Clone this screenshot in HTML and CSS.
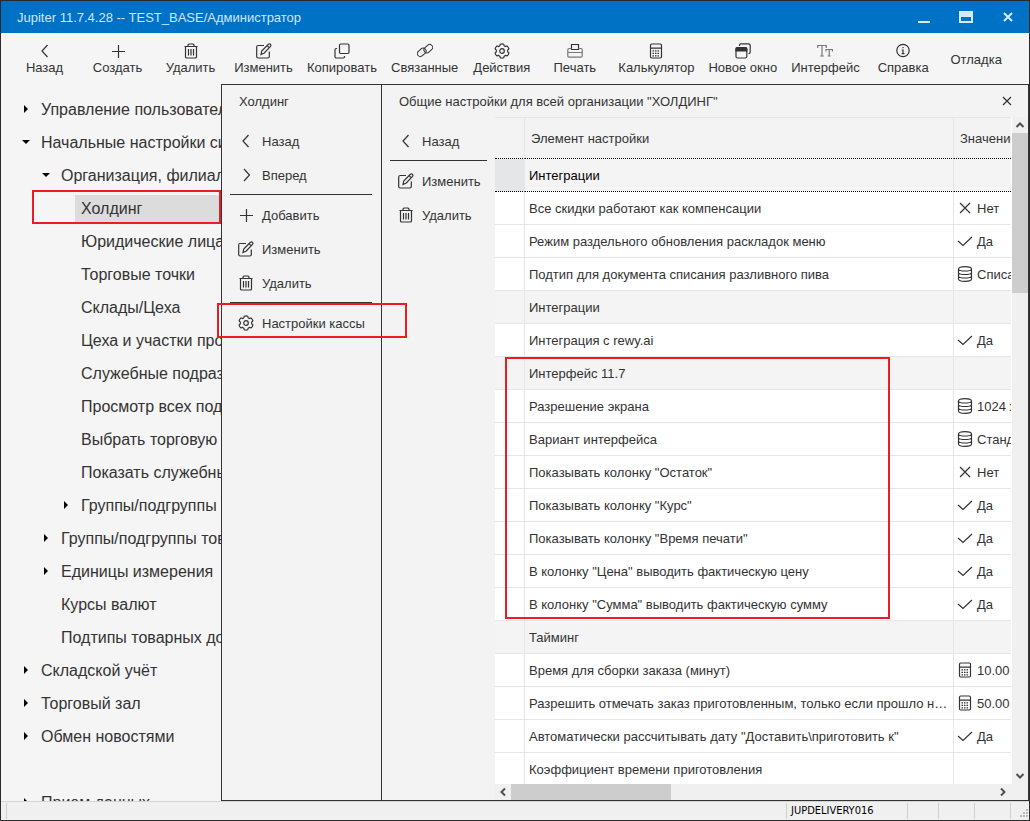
FILE: index.html
```html
<!DOCTYPE html>
<html lang="ru">
<head>
<meta charset="utf-8">
<title>Jupiter 11.7.4.28 -- TEST_BASE/Администратор</title>
<link rel="stylesheet" href="styles.css">
</head>
<body>
<svg class="sprite" aria-hidden="true">
  <symbol id="i-back" viewBox="0 0 16 16"><path d="M10.500 2 5 8l5.500 6"/></symbol>
  <symbol id="i-forward" viewBox="0 0 16 16"><path d="M6 2l5.500 6L6 14"/></symbol>
  <symbol id="i-plus" viewBox="0 0 16 16"><path d="M8.500 2v13M2 8.500h13"/></symbol>
  <symbol id="i-trash" viewBox="0 0 16 16"><path d="M1.500 3.500h13M5 3.500V2l1-1h4l1 1v1.500M2.500 3.500v10.200q0 1.300 1.300 1.300h8.400q1.300 0 1.300-1.300V3.500M5.500 6v6.500M8 6v6.500M10.500 6v6.500"/></symbol>
  <symbol id="i-edit" viewBox="0 0 16 16"><path d="M8 2.500H2.200Q.7 2.500.7 4v9.500Q.7 15 2.200 15h9.600q1.500 0 1.500-1.500V8.500M5 11.500l.7-3.500L12.400 1.300q1-.8 2 0 1 1 .1 2L8.300 10zM11.300 2.800l2 2"/></symbol>
  <symbol id="i-copy" viewBox="0 0 16 16"><path d="M6.700 1h7.100q1.200 0 1.200 1.200v7.100q0 1.200-1.200 1.200H6.700q-1.200 0-1.200-1.200V2.200Q5.500 1 6.700 1zM3 5.500h-.800Q1 5.500 1 6.700v7.100Q1 15 2.200 15h7.100q1.200 0 1.200-1.200V13"/></symbol>
  <symbol id="i-link" viewBox="0 0 16 16"><g class="thin"><rect x="-4.800" y="-3" width="9.600" height="6" rx="3" transform="translate(4.700 9.300) rotate(-42)"/><rect x="-4.800" y="-3" width="9.600" height="6" rx="3" transform="translate(11.300 5.700) rotate(-42)"/></g></symbol>
  <symbol id="i-gear" viewBox="0 0 16 16"><path d="M6.300 1.200Q8 .4 9.700 1.200l.4 1.500 1.300.8 1.600-.5q1.500 1 1.900 2.900l-1.200 1.200v1.700l1.200 1.200q-.4 1.900-1.900 2.900l-1.600-.4-1.300.8-.4 1.500q-1.700.8-3.400 0l-.4-1.500-1.300-.8-1.600.4q-1.500-1-1.900-2.900l1.200-1.200V7.100L1.100 5.900Q1.500 4 3 3l1.600.5 1.300-.8z"/><circle cx="8" cy="8" r="2.300"/></symbol>
  <symbol id="i-print" viewBox="0 0 16 16"><path d="M4.500 6.500v-5h7v5z"/><g class="soft"><path d="M4.500 5.500H2Q.8 5.500.8 7v6q0 1.200 1.200 1.200h12q1.200 0 1.200-1.200V7q0-1.500-1.200-1.500h-2.500M1 9.500h14"/></g></symbol>
  <symbol id="i-calc" viewBox="0 0 16 16"><path d="M3.700 1h8.600q1.200 0 1.200 1.200v11.600q0 1.200-1.200 1.200H3.700q-1.200 0-1.200-1.200V2.200Q2.500 1 3.700 1zM2.500 5.200h11"/><path stroke-dasharray="1.500 1" d="M4.500 7.800h7M4.500 10.300h7M4.500 12.800h7"/></symbol>
  <symbol id="i-windows" viewBox="0 0 16 16"><path d="M4.500 3V2.200Q4.500.8 6 .8h7.500q1.700 0 1.700 1.700V9q0 1.700-1.700 1.700M2.500 4.500h7.800q1.500 0 1.500 1.500v7.500q0 1.500-1.500 1.500H2.500Q1 15 1 13.500V6q0-1.500 1.500-1.500z"/><path class="solid" d="M1 8V6q0-1.500 1.500-1.500h7.800q1.500 0 1.500 1.500v2z"/></symbol>
  <symbol id="i-type" viewBox="0 0 16 16"><g class="soft"><path d="M.7 5V2.500h8.600V5M5 2.500v10.200M3.200 13h3.600M9 8.500V6.500h6.400v2M12.200 6.500V13M10.700 13h3"/></g></symbol>
  <symbol id="i-info" viewBox="0 0 16 16"><circle cx="8" cy="7.500" r="6.200"/><path d="M8 4v1.300M6.700 7H8v3.500M6.600 10.600h2.800"/></symbol>
  <symbol id="i-check" viewBox="0 0 16 16"><path d="M1 8l5 4.500L15 4"/></symbol>
  <symbol id="i-cross" viewBox="0 0 16 16"><path d="M3 3l10 10M13 3 3 13"/></symbol>
  <symbol id="i-db" viewBox="0 0 16 16"><path d="M1.500 3Q1.500.7 8 .7T14.500 3v10q0 2.300-6.500 2.300T1.500 13zM1.500 3.500q1 1.500 6.500 1.500t6.500-1.500M1.500 7q1 1.500 6.500 1.500T14.500 7M1.500 10.500q1 1.500 6.500 1.500t6.500-1.500"/></symbol>
  <symbol id="i-chev" viewBox="0 0 16 16"><path d="M4.500 10 8 6.500l3.500 3.500"/></symbol>
  <symbol id="i-right" viewBox="0 0 8 8"><path d="M2 0l4 4-4 4z"/></symbol>
  <symbol id="i-down" viewBox="0 0 8 8"><path d="M0 2h8L4 6z"/></symbol>
</svg>

<div class="window">
  <header class="titlebar">
    <h1 class="title">Jupiter 11.7.4.28 -- TEST_BASE/Администратор</h1>
    <button class="win-btn" aria-label="Свернуть"><svg viewBox="0 0 14 14"><path d="M1 12h12"/></svg></button>
    <button class="win-btn" aria-label="Развернуть"><svg viewBox="0 0 14 14"><path d="M1 2h12v10H1z"/><path class="fill" d="M1 2h12v4H1z"/></svg></button>
    <button class="win-btn" aria-label="Закрыть"><svg viewBox="0 0 14 14"><path d="M3 3l8 8M11 3l-8 8"/></svg></button>
  </header>

  <nav class="toolbar" aria-label="Панель инструментов">
    <button class="tool"><svg class="icon"><use href="#i-back"/></svg>Назад</button>
    <button class="tool"><svg class="icon"><use href="#i-plus"/></svg>Создать</button>
    <button class="tool"><svg class="icon"><use href="#i-trash"/></svg>Удалить</button>
    <button class="tool"><svg class="icon"><use href="#i-edit"/></svg>Изменить</button>
    <button class="tool"><svg class="icon"><use href="#i-copy"/></svg>Копировать</button>
    <button class="tool"><svg class="icon"><use href="#i-link"/></svg>Связанные</button>
    <button class="tool"><svg class="icon"><use href="#i-gear"/></svg>Действия</button>
    <button class="tool"><svg class="icon"><use href="#i-print"/></svg>Печать</button>
    <button class="tool"><svg class="icon"><use href="#i-calc"/></svg>Калькулятор</button>
    <button class="tool"><svg class="icon"><use href="#i-windows"/></svg>Новое окно</button>
    <button class="tool"><svg class="icon"><use href="#i-type"/></svg>Интерфейс</button>
    <button class="tool"><svg class="icon"><use href="#i-info"/></svg>Справка</button>
    <button class="tool">Отладка</button>
  </nav>

  <main class="workspace">
    <ul class="tree">
      <li class="node"><svg class="arrow"><use href="#i-right"/></svg><span class="node-label">Управление пользователями</span></li>
      <li class="node"><svg class="arrow"><use href="#i-down"/></svg><span class="node-label">Начальные настройки системы</span></li>
      <li class="node level-2"><svg class="arrow"><use href="#i-down"/></svg><span class="node-label">Организация, филиалы</span></li>
      <li class="node level-3 selected"><span class="arrow"></span><span class="node-label">Холдинг</span><span class="mark mark-node"></span></li>
      <li class="node level-3"><span class="arrow"></span><span class="node-label">Юридические лица</span></li>
      <li class="node level-3"><span class="arrow"></span><span class="node-label">Торговые точки</span></li>
      <li class="node level-3"><span class="arrow"></span><span class="node-label">Склады/Цеха</span></li>
      <li class="node level-3"><span class="arrow"></span><span class="node-label">Цеха и участки производства</span></li>
      <li class="node level-3"><span class="arrow"></span><span class="node-label">Служебные подразделения</span></li>
      <li class="node level-3"><span class="arrow"></span><span class="node-label">Просмотр всех подразделений</span></li>
      <li class="node level-3"><span class="arrow"></span><span class="node-label">Выбрать торговую точку</span></li>
      <li class="node level-3"><span class="arrow"></span><span class="node-label">Показать служебные</span></li>
      <li class="node level-3"><svg class="arrow"><use href="#i-right"/></svg><span class="node-label">Группы/подгруппы</span></li>
      <li class="node level-2"><svg class="arrow"><use href="#i-right"/></svg><span class="node-label">Группы/подгруппы товаров</span></li>
      <li class="node level-2"><svg class="arrow"><use href="#i-right"/></svg><span class="node-label">Единицы измерения</span></li>
      <li class="node level-2"><span class="arrow"></span><span class="node-label">Курсы валют</span></li>
      <li class="node level-2"><span class="arrow"></span><span class="node-label">Подтипы товарных документов</span></li>
      <li class="node"><svg class="arrow"><use href="#i-right"/></svg><span class="node-label">Складской учёт</span></li>
      <li class="node"><svg class="arrow"><use href="#i-right"/></svg><span class="node-label">Торговый зал</span></li>
      <li class="node"><svg class="arrow"><use href="#i-right"/></svg><span class="node-label">Обмен новостями</span></li>
      <li class="node"></li>
      <li class="node"><svg class="arrow"><use href="#i-right"/></svg><span class="node-label">Прием данных</span></li>
    </ul>

    <div class="dialogs">
      <section class="panel-holding">
        <h2 class="panel-title">Холдинг</h2>
        <div class="menu">
          <button class="menu-item"><svg class="icon"><use href="#i-back"/></svg>Назад</button>
          <button class="menu-item"><svg class="icon"><use href="#i-forward"/></svg>Вперед</button>
          <hr class="menu-sep">
          <button class="menu-item"><svg class="icon"><use href="#i-plus"/></svg>Добавить</button>
          <button class="menu-item"><svg class="icon"><use href="#i-edit"/></svg>Изменить</button>
          <button class="menu-item"><svg class="icon"><use href="#i-trash"/></svg>Удалить</button>
          <hr class="menu-sep">
          <button class="menu-item"><svg class="icon"><use href="#i-gear"/></svg>Настройки кассы<span class="mark mark-menu"></span></button>
        </div>
      </section>

      <section class="panel-settings">
        <header class="panel-head">
          <h2 class="panel-title">Общие настройки для всей организации "ХОЛДИНГ"</h2>
          <button class="close" aria-label="Закрыть"><svg viewBox="0 0 10 10"><path d="M1 1l8 8M9 1 1 9"/></svg></button>
        </header>
        <div class="panel-body">
          <div class="menu menu-narrow">
            <button class="menu-item"><svg class="icon"><use href="#i-back"/></svg>Назад</button>
            <hr class="menu-sep">
            <button class="menu-item"><svg class="icon"><use href="#i-edit"/></svg>Изменить</button>
            <button class="menu-item"><svg class="icon"><use href="#i-trash"/></svg>Удалить</button>
          </div>

          <div class="grid">
            <div class="grid-view">
              <table class="settings">
                <colgroup><col class="col-marker"><col><col class="col-value"></colgroup>
                <thead><tr><th></th><th>Элемент настройки</th><th>Значение</th></tr></thead>
                <tbody>
                  <tr class="group current"><td></td><td>Интеграции</td><td></td></tr>
                  <tr><td></td><td>Все скидки работают как компенсации</td><td><span class="value"><svg class="icon"><use href="#i-cross"/></svg>Нет</span></td></tr>
                  <tr><td></td><td>Режим раздельного обновления раскладок меню</td><td><span class="value"><svg class="icon"><use href="#i-check"/></svg>Да</span></td></tr>
                  <tr><td></td><td>Подтип для документа списания разливного пива</td><td><span class="value"><svg class="icon"><use href="#i-db"/></svg>Списание</span></td></tr>
                  <tr class="group"><td></td><td>Интеграции</td><td></td></tr>
                  <tr><td></td><td>Интеграция с rewy.ai</td><td><span class="value"><svg class="icon"><use href="#i-check"/></svg>Да</span></td></tr>
                </tbody>
                <tbody class="marked">
                  <tr class="group"><td></td><td>Интерфейс 11.7</td><td></td></tr>
                  <tr><td></td><td>Разрешение экрана</td><td><span class="value"><svg class="icon"><use href="#i-db"/></svg>1024 x 768</span></td></tr>
                  <tr><td></td><td>Вариант интерфейса</td><td><span class="value"><svg class="icon"><use href="#i-db"/></svg>Стандартный</span></td></tr>
                  <tr><td></td><td>Показывать колонку "Остаток"</td><td><span class="value"><svg class="icon"><use href="#i-cross"/></svg>Нет</span></td></tr>
                  <tr><td></td><td>Показывать колонку "Курс"</td><td><span class="value"><svg class="icon"><use href="#i-check"/></svg>Да</span></td></tr>
                  <tr><td></td><td>Показывать колонку "Время печати"</td><td><span class="value"><svg class="icon"><use href="#i-check"/></svg>Да</span></td></tr>
                  <tr><td></td><td>В колонку "Цена" выводить фактическую цену</td><td><span class="value"><svg class="icon"><use href="#i-check"/></svg>Да</span></td></tr>
                  <tr><td></td><td>В колонку "Сумма" выводить фактическую сумму</td><td><span class="value"><svg class="icon"><use href="#i-check"/></svg>Да</span></td></tr>
                </tbody>
                <tbody>
                  <tr class="group"><td></td><td>Тайминг</td><td></td></tr>
                  <tr><td></td><td>Время для сборки заказа (минут)</td><td><span class="value"><svg class="icon"><use href="#i-calc"/></svg>10.00</span></td></tr>
                  <tr><td></td><td>Разрешить отмечать заказ приготовленным, только если прошло не менее (%)</td><td><span class="value"><svg class="icon"><use href="#i-calc"/></svg>50.00</span></td></tr>
                  <tr><td></td><td>Автоматически рассчитывать дату "Доставить\приготовить к"</td><td><span class="value"><svg class="icon"><use href="#i-check"/></svg>Да</span></td></tr>
                  <tr><td></td><td>Коэффициент времени приготовления</td><td></td></tr>
                </tbody>
              </table>
            </div>
            <div class="scroll scroll-v">
              <button class="scroll-btn" aria-label="Вверх"><svg><use href="#i-chev"/></svg></button>
              <div class="thumb"></div>
              <button class="scroll-btn down" aria-label="Вниз"><svg><use href="#i-chev"/></svg></button>
            </div>
            <div class="scroll scroll-h">
              <button class="scroll-btn left" aria-label="Влево"><svg><use href="#i-chev"/></svg></button>
              <div class="thumb"></div>
              <button class="scroll-btn right" aria-label="Вправо"><svg><use href="#i-chev"/></svg></button>
            </div>
          </div>
        </div>
      </section>
    </div>
  </main>

  <footer class="status">
    <span class="status-cell cell-main"></span>
    <span class="status-cell cell-name">JUPDELIVERY016</span>
    <span class="status-cell cell-a"></span>
    <span class="status-cell cell-b"></span>
    <span class="status-cell cell-b"></span>
    <span class="status-cell cell-grip"><svg viewBox="0 0 10 10"><path d="M7 0h2v2H7zM4 3h2v2H4zM7 3h2v2H7zM1 6h2v2H1zM4 6h2v2H4zM7 6h2v2H7z"/></svg></span>
  </footer>
</div>
</body>
</html>
```
FILE: styles.css
```css
* { box-sizing: border-box; }

:root {
  --ink: #333;
  --line: #e6e6e6;
  --mark: #ed1c24;
}

body {
  margin: 0;
  background: #222;
  color: var(--ink);
  font: 13px/18px "Liberation Sans", Arial, sans-serif;
}

h1, h2 { margin: 0; font: inherit; }

button {
  border: 0;
  padding: 0;
  background: none;
  color: inherit;
  font: inherit;
}

.sprite { position: absolute; width: 0; height: 0; }

.icon {
  flex: none;
  width: 16px;
  height: 16px;
  fill: none;
  stroke: var(--ink);
  stroke-width: 1.2;
}
.thin { stroke-width: 1; }
.soft { stroke: #777; }
.solid { fill: var(--ink); }

.window {
  display: flex;
  flex-direction: column;
  height: 100vh;
  overflow: hidden;
  border: 1px solid #2b2b2b;
  background: #f5f5f5;
}

/* Title bar */
.titlebar {
  display: flex;
  flex: none;
  align-items: center;
  height: 32px;
  padding-left: 16px;
  background: #0072c6;
  color: #cfe6f8;
}
.title { flex: 1; padding-top: 2px; }
.win-btn {
  display: grid;
  place-items: center;
  width: 42px;
  height: 32px;
}
.win-btn svg {
  width: 14px;
  height: 14px;
  fill: none;
  stroke: #d5eaf9;
  stroke-width: 2;
}
.win-btn .fill { fill: #d5eaf9; }

/* Toolbar */
.toolbar {
  display: flex;
  flex: none;
  height: 51px;
  padding: 6px 7px 3px;
}
.tool {
  display: flex;
  flex: none;
  flex-direction: column;
  align-items: center;
  justify-content: center;
  min-width: 73px;
  padding: 0 7px;
}

/* Workspace */
.workspace {
  display: grid;
  grid-template-columns: 220px 1fr;
  flex: 1;
  min-height: 0;
}

.tree {
  min-width: 0;
  margin: 0;
  padding: 9px 0 0;
  overflow: hidden;
  list-style: none;
  font-size: 16px;
  line-height: 27px;
  white-space: nowrap;
}
.node {
  display: flex;
  align-items: center;
  height: 33px;
  padding-left: 21px;
}
.level-2 { padding-left: 41px; }
.level-3 { padding-left: 61px; }
.arrow {
  flex: none;
  width: 8px;
  height: 8px;
  margin: 0 5px 2px 0;
  fill: #000;
}
.node-label { flex: 1; padding-left: 6px; }
.selected { position: relative; }
.selected .node-label { background: #dcdcdc; }

/* Red call-out frames */
.mark {
  position: absolute;
  border: 2px solid var(--mark);
  pointer-events: none;
}
.mark-node { inset: -2px 0 1px 31px; }
.mark-menu { inset: -3px -35px 2px -13px; z-index: 1; }

/* Dialogs */
.dialogs {
  display: grid;
  grid-template-columns: 160px 1fr;
  min-width: 0;
  min-height: 0;
  border: 1px solid var(--ink);
  background: #f3f3f3;
}
.panel-holding { border-right: 1px solid var(--ink); }
.panel-title { padding: 8px 0 6px 17px; }

.menu { padding: 7px 9px 0 8px; }
.menu-narrow { flex: none; width: 113px; padding-right: 8px; }
.menu-item {
  position: relative;
  display: flex;
  align-items: center;
  gap: 8px;
  width: 100%;
  height: 34px;
  padding: 1px 0 0 8px;
  text-align: left;
  white-space: nowrap;
}
.menu-item .icon { margin-bottom: 2px; }
.menu-sep {
  height: 1px;
  margin: 2px 0 3px;
  border: 0;
  background: var(--ink);
}

.panel-settings {
  display: flex;
  flex-direction: column;
  min-width: 0;
  min-height: 0;
}
.panel-head { display: flex; justify-content: space-between; }
.close {
  display: grid;
  place-items: center;
  width: 42px;
}
.close svg {
  width: 10px;
  height: 10px;
  fill: none;
  stroke: var(--ink);
  stroke-width: 1.2;
}
.panel-body { display: flex; flex: 1; min-height: 0; }

/* Settings grid */
.grid {
  display: grid;
  flex: 1;
  grid-template: 1fr 16px / 1fr 17px;
  min-width: 0;
  background: #f0f0f0;
}
.grid-view {
  min-height: 0;
  overflow: hidden;
  background: #fff;
}
.settings {
  width: 100%;
  border-spacing: 0;
  table-layout: fixed;
}
.col-marker { width: 30px; }
.col-value { width: 57px; }
.settings th,
.settings td {
  height: 33px;
  padding: 2px 1px 0 4px;
  overflow: hidden;
  border-right: 1px solid var(--line);
  border-bottom: 1px solid var(--line);
  font-weight: normal;
  text-align: left;
  text-overflow: ellipsis;
  white-space: nowrap;
}
.settings th {
  height: 42px;
  padding-left: 6px;
  border-top: 1px solid var(--line);
  border-bottom: 1px dotted #000;
  background: #f3f3f3;
}
.settings th:last-child,
.settings td:last-child {
  padding: 2px 0 0 3px;
  border-right: 0;
  text-overflow: clip;
}
.settings th:last-child { padding-left: 6px; }
.group td { background: #f4f4f4; }
.current td { border-bottom: 1px dotted #000; color: #000; }
.current td:first-child { background: #e5e6e8; }
.value { display: flex; align-items: center; gap: 4px; }
.value .icon { margin-bottom: 2px; }

.marked { position: relative; }
.marked::after {
  content: "";
  position: absolute;
  inset: 0 121px 2px 10px;
  border: 2px solid var(--mark);
  pointer-events: none;
}

/* Scroll bars */
.scroll { display: flex; }
.scroll-v {
  flex-direction: column;
  border-left: 1px solid #fff;
}
.scroll-h { flex-direction: row; }
.scroll-btn {
  display: grid;
  flex: none;
  place-items: center;
  width: 16px;
  height: 16px;
}
.scroll-btn svg {
  width: 16px;
  height: 16px;
  fill: none;
  stroke: #505050;
  stroke-width: 2;
}
.down { margin-top: auto; transform: rotate(180deg); }
.left { transform: rotate(-90deg); }
.right { margin-left: auto; transform: rotate(90deg); }
.thumb { background: #cdcdcd; }
.scroll-v .thumb { height: 24%; }
.scroll-h .thumb { width: 31%; }

/* Status bar */
.status {
  display: flex;
  flex: none;
  height: 19px;
  padding: 1px 0 1px 5px;
  border-top: 1px solid #d4d4d4;
  background: #f0f0f0;
  color: #000;
  font: 11px/16px "DejaVu Sans Condensed", "DejaVu Sans", sans-serif;
}
.status-cell {
  flex: none;
  padding-left: 4px;
  border-left: 1px solid #d0d0d0;
}
.cell-main { flex: 1; }
.cell-name { width: 121px; }
.cell-a { width: 31px; }
.cell-b { width: 36px; }
.cell-grip {
  display: flex;
  align-items: flex-end;
  justify-content: flex-end;
  width: 19px;
}
.cell-grip svg { width: 10px; height: 10px; fill: #b8b8b8; }
```
